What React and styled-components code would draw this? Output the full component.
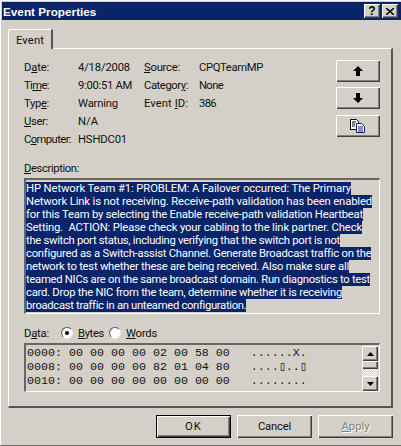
import React, { useLayoutEffect, useRef } from "react";
import styled, { createGlobalStyle } from "styled-components";

const Global = createGlobalStyle`
  html, body { margin: 0; padding: 0; background: #d4d0c8; overflow: hidden; }
  * { box-sizing: border-box; }
`;

const Win = styled.div`
  width: 401px; height: 446px; overflow: hidden;
  display: flex; flex-direction: column;
  background: #d4d0c8; color: #111;
  font-family: Roboto, "Liberation Sans", Arial, sans-serif; font-size: 11.25px;
  padding: 2px 0 1px 2px;
  border-bottom: 1px solid #6f6f6f;
  box-shadow: inset 1px 1px 0 #fff;
`;
const TitleBar = styled.div`
  height: 18px; flex: none; background: #0a246a; color: #fff;
  display: flex; align-items: center; justify-content: space-between;
  padding: 0 3px 0 1px;
`;
const TitleText = styled.div`
  font-family: "Liberation Sans", Arial, sans-serif;
  font-weight: bold; font-size: 11.75px;
`;
const Caps = styled.div` display: flex; gap: 2px; `;
const Cap = styled.div`
  width: 16px; height: 14px; background: #d4d0c8; color: #000; display: flex; align-items: center; justify-content: center;
  font-family: "Liberation Sans", Arial, sans-serif; font-weight: bold; font-size: 12px;
  box-shadow: inset 1px 1px 0 #fff, inset -1px -1px 0 #404040, inset -2px -2px 0 #808080;
`;
const Body = styled.div`
  flex: 1; display: flex; flex-direction: column; padding: 8px 6px 0 6px;
`;
const TabStrip = styled.div` height: 20px; display: flex; align-items: flex-end; flex: none; `;
const Tab = styled.div`
  width: 45px; height: 20px; display: flex; align-items: center; justify-content: center;
  border-top: 1px solid #fff; border-left: 1px solid #fff; border-right: 2px solid #555;
  border-top-left-radius: 2px; padding-top: 1px; margin-bottom: -1px; position: relative;
  background: #d4d0c8; z-index: 1;
`;
const Panel = styled.div`
  height: 360px; flex: none; width: 385px;
  border-top: 1px solid #fff; border-left: 1px solid #fff;
  border-right: 2px solid #555; border-bottom: 2px solid #555;
  padding: 10px 11px 0 15px;
`;
const Top = styled.div` display: flex; justify-content: space-between; align-items: flex-start; height: 90px; `;
const Fields = styled.div`
  display: grid; grid-template-columns: 54px 66px 55px auto; grid-auto-rows: 18px; align-items: center;
  line-height: 18px; white-space: nowrap;
`;
const Tools = styled.div` display: flex; flex-direction: column; margin-top: 1px; `;
const ToolBtn = styled.div`
  width: 44px; height: 22px; margin-bottom: ${p => p.$gap}px;
  display: flex; align-items: center; justify-content: center; background: #d4d0c8;
  box-shadow: inset 1px 1px 0 #fff, inset -1px -1px 0 #404040, inset -2px -2px 0 #808080;
`;
const Label = styled.div`
  height: 14px; line-height: 14px; margin-top: ${p => p.$top || 0}px; white-space: nowrap;
`;
const Sunken = styled.div`
  width: 356px; border-top: 2px solid #666; border-left: 2px solid #666;
  border-right: 1px solid #fff; border-bottom: 1px solid #fff;
`;
const DescBox = styled(Sunken)`
  height: 136px; margin-top: 2px; padding: 2px 0 0 0;
`;
const FitText = styled.span`
  display: inline-block; white-space: pre; justify-self: start; width: fit-content;
`;
const DescLine = styled.div`
  display: block; width: fit-content; height: 13px; line-height: 13px; background: #0a246a; color: #fff;
  white-space: pre; overflow: hidden;
`;
const DataRow = styled.div` display: flex; align-items: center; height: 14px; margin-top: 12px; `;
const DataLabel = styled.span` width: 37px; flex: none; `;
const RadioGroup = styled.label` display: flex; align-items: center; gap: 5px; width: ${p => p.$w}px; flex: none; `;
const Radio = styled.span`
  width: 12px; height: 12px; border-radius: 50%; flex: none; background: #fff;
  border: 1px solid; border-color: #555 #eee #eee #555;
  display: flex; align-items: center; justify-content: center;
  &::after { content: ""; width: 4px; height: 4px; border-radius: 50%; background: ${p => p.$on ? "#000" : "transparent"}; }
`;
const DataBox = styled(Sunken)`
  height: 49px; margin-top: 3px; position: relative; padding: 1px 0 0 1px;
`;
const Hex = styled.div`
  font-family: "Liberation Mono", monospace; font-size: 11.67px; line-height: 14px; white-space: pre;
`;
const Scroll = styled.div`
  position: absolute; right: 1px; top: 1px; width: 16px; height: 45px;
  display: flex; flex-direction: column;
`;
const ScrollBtn = styled.div`
  height: 15px; flex: none; background: #d4d0c8; display: flex; align-items: center; justify-content: center;
  box-shadow: inset 1px 1px 0 #fff, inset -1px -1px 0 #404040, inset -2px -2px 0 #808080;
`;
const Thumb = styled.div`
  height: 8px; flex: none; background: #d4d0c8;
  box-shadow: inset 1px 1px 0 #fff, inset -1px -1px 0 #404040, inset -2px -2px 0 #808080;
`;
const Track = styled.div`
  flex: 1; background: repeating-conic-gradient(#fff 0 25%, #d4d0c8 0 50%) 0 0 / 2px 2px;
`;
const Footer = styled.div`
  display: flex; justify-content: flex-end; gap: 6px; margin-top: 7px; width: 385px;
`;
const Btn = styled.div`
  width: 75px; height: 23px; display: flex; align-items: center; justify-content: center;
  background: #d4d0c8;
  color: ${p => p.$off ? "#808080" : "#111"};
  text-shadow: ${p => p.$off ? "1px 1px 0 #fff" : "none"};
  border: ${p => p.$def ? "1px solid #000" : "0"};
  box-shadow: inset 1px 1px 0 #fff, inset -1px -1px 0 #404040, inset -2px -2px 0 #808080;
`;

/* Fits a text to the width it has in the reference by tuning letter spacing, measured at run time. */
const Fit = ({ w, children }) => {
  const ref = useRef(null);
  useLayoutEffect(() => {
    const el = ref.current;
    el.style.letterSpacing = "0px";
    const natural = el.getBoundingClientRect().width;
    el.style.letterSpacing = `${(w - natural) / el.textContent.length}px`;
  }, [w]);
  return <FitText ref={ref}>{children}</FitText>;
};

const ArrowUp = () => (
  <svg width="10" height="10" viewBox="0 0 10 10"><path d="M5 0 10 5H7v5H3V5H0z" fill="#000" /></svg>
);
const ArrowDown = () => (
  <svg width="10" height="10" viewBox="0 0 10 10"><path d="M3 0h4v5h3L5 10 0 5h3z" fill="#000" /></svg>
);
const CopyIcon = () => (
  <svg width="16" height="14" viewBox="0 0 16 14">
    <path d="M.5.5h6l2 2v8h-8z" fill="#fff" stroke="#000" />
    <path d="M2 3h4M2 5h3M2 7h3" stroke="#000" />
    <path d="M6.5 4.5h5l3 3v6h-8z" fill="#fff" stroke="#0a246a" />
    <path d="M8 8h5M8 10h5M8 12h5" stroke="#0a246a" />
  </svg>
);
const Tri = ({ down }) => (
  <svg width="7" height="4" viewBox="0 0 7 4"><path d={down ? "M0 0h7L3.5 4z" : "M3.5 0 7 4H0z"} fill="#000" /></svg>
);

const lines = [
  ["HP Network Team #1: PROBLEM: A Failover occurred: The Primary", 325],
  ["Network Link is not receiving. Receive-path validation has been enabled", 346],
  ["for this Team by selecting the Enable receive-path validation Heartbeat", 337],
  ["Setting.  ACTION: Please check your cabling to the link partner. Check", 336],
  ["the switch port status, including verifying that the switch port is not", 314],
  ["configured as a Switch-assist Channel. Generate Broadcast traffic on the", 344],
  ["network to test whether these are being received. Also make sure all", 323],
  ["teamed NICs are on the same broadcast domain. Run diagnostics to test", 344],
  ["card. Drop the NIC from the team, determine whether it is receiving", 316],
  ["broadcast traffic in an unteamed configuration.", 219],
];
const hex = [
  "0000: 00 00 00 00 02 00 58 00   ......X.",
  "0008: 00 00 00 00 82 01 04 80   ....\u25AF..\u25AF",
  "0010: 00 00 00 00 00 00 00 00   ........",
];

export default function App() {
  return (
    <Win>
      <Global />
      <TitleBar>
        <TitleText>Event Properties</TitleText>
        <Caps>
          <Cap>?</Cap>
          <Cap>
            <svg width="8" height="7" viewBox="0 0 8 7"><path d="M0 0 8 7M8 0 0 7" stroke="#000" strokeWidth="1.5" /></svg>
          </Cap>
        </Caps>
      </TitleBar>
      <Body>
        <TabStrip><Tab><Fit w={28}>Event</Fit></Tab></TabStrip>
        <Panel>
          <Top>
            <Fields>
              <Fit w={25}>D<u>a</u>te:</Fit><Fit w={52}>4/18/2008</Fit><Fit w={36}><u>S</u>ource:</Fit><Fit w={64}>CPQTeamMP</Fit>
              <Fit w={25}>Ti<u>m</u>e:</Fit><Fit w={54}>9:00:51 AM</Fit><Fit w={44}>Categor<u>y</u>:</Fit><Fit w={24}>None</Fit>
              <Fit w={25}>Typ<u>e</u>:</Fit><Fit w={40}>Warning</Fit><Fit w={44}>Event <u>I</u>D:</Fit><Fit w={17}>386</Fit>
              <Fit w={24}><u>U</u>ser:</Fit><Fit w={20}>N/A</Fit><span /><span />
              <Fit w={47}>C<u>o</u>mputer:</Fit><Fit w={49}>HSHDC01</Fit><span /><span />
            </Fields>
            <Tools>
              <ToolBtn $gap={5}><ArrowUp /></ToolBtn>
              <ToolBtn $gap={6}><ArrowDown /></ToolBtn>
              <ToolBtn $gap={0}><CopyIcon /></ToolBtn>
            </Tools>
          </Top>
          <Label $top={13}><Fit w={55}><u>D</u>escription:</Fit></Label>
          <DescBox>
            {lines.map(([l, w], i) => <DescLine key={i}><Fit w={w}>{l}</Fit></DescLine>)}
          </DescBox>
          <DataRow>
            <DataLabel><Fit w={25}>D<u>a</u>ta:</Fit></DataLabel>
            <RadioGroup $w={48}><Radio $on /><Fit w={26}><u>B</u>ytes</Fit></RadioGroup>
            <RadioGroup $w={60}><Radio /><Fit w={31}><u>W</u>ords</Fit></RadioGroup>
          </DataRow>
          <DataBox>
            {hex.map((h, i) => <Hex key={i}>{h}</Hex>)}
            <Scroll>
              <ScrollBtn><Tri /></ScrollBtn>
              <Thumb />
              <Track />
              <ScrollBtn><Tri down /></ScrollBtn>
            </Scroll>
          </DataBox>
        </Panel>
        <Footer>
          <Btn $def><Fit w={17}>OK</Fit></Btn>
          <Btn><Fit w={33}>Cancel</Fit></Btn>
          <Btn $off><Fit w={28}><u>A</u>pply</Fit></Btn>
        </Footer>
      </Body>
    </Win>
  );
}
